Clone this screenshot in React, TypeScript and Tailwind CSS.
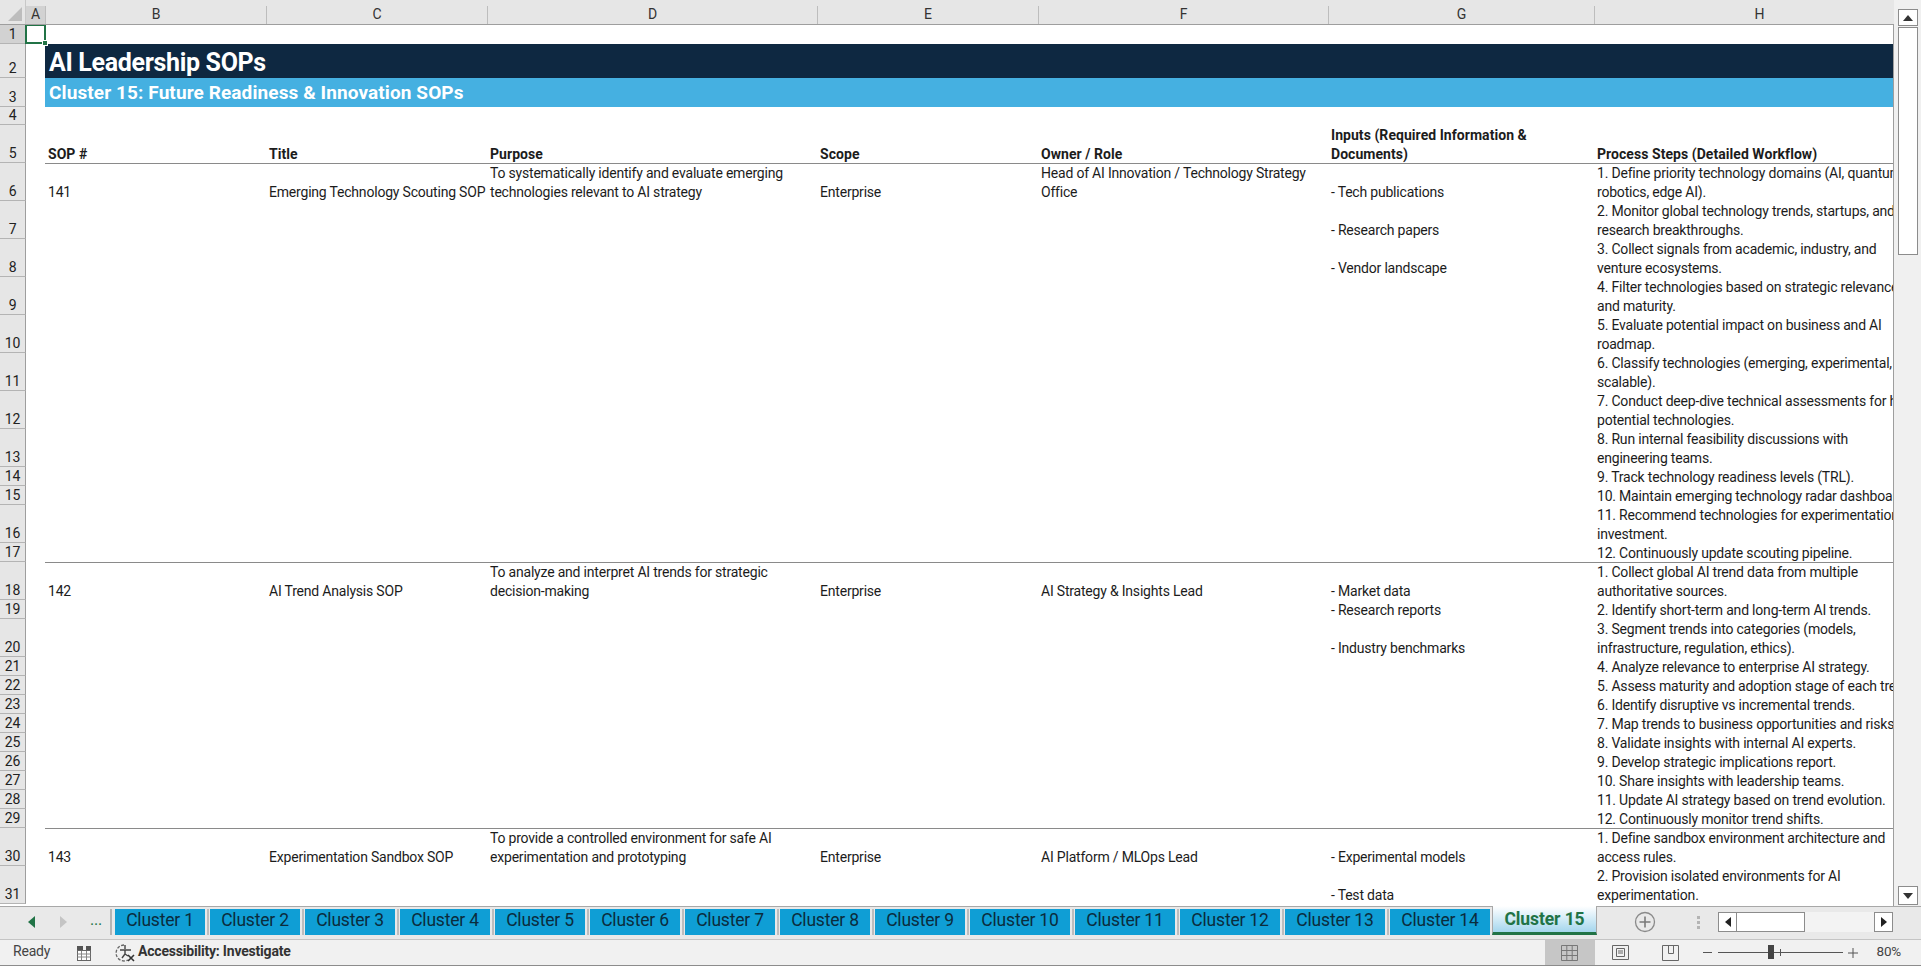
import React from 'react';

const FONT = "font-['Roboto','Liberation_Sans',sans-serif]";

const COLS = [
  { label: 'A', w: 'w-[20px]' },
  { label: 'B', w: 'w-[221px]' },
  { label: 'C', w: 'w-[221px]' },
  { label: 'D', w: 'w-[330px]' },
  { label: 'E', w: 'w-[221px]' },
  { label: 'F', w: 'w-[290px]' },
  { label: 'G', w: 'w-[266px]' },
  { label: 'H', w: 'w-[330px]' },
];

type SheetRow = {
  n: number;
  h: string;
  sop?: string;
  title?: string;
  purpose?: string[];
  scope?: string;
  owner?: string[];
  input?: string[];
  steps?: string[];
  bold?: boolean;
  line?: boolean;
};

const T = 'h-[38px]';
const S = 'h-[19px]';

const rows: SheetRow[] = [
  { n: 5, h: T, bold: true, line: true, sop: 'SOP #', title: 'Title', purpose: ['Purpose'], scope: 'Scope', owner: ['Owner / Role'], input: ['Inputs (Required Information &', 'Documents)'], steps: ['Process Steps (Detailed Workflow)'] },
  { n: 6, h: T, sop: '141', title: 'Emerging Technology Scouting SOP', purpose: ['To systematically identify and evaluate emerging', 'technologies relevant to AI strategy'], scope: 'Enterprise', owner: ['Head of AI Innovation / Technology Strategy', 'Office'], input: ['- Tech publications'], steps: ['1. Define priority technology domains (AI, quantum,', 'robotics, edge AI).'] },
  { n: 7, h: T, input: ['- Research papers'], steps: ['2. Monitor global technology trends, startups, and', 'research breakthroughs.'] },
  { n: 8, h: T, input: ['- Vendor landscape'], steps: ['3. Collect signals from academic, industry, and', 'venture ecosystems.'] },
  { n: 9, h: T, steps: ['4. Filter technologies based on strategic relevance', 'and maturity.'] },
  { n: 10, h: T, steps: ['5. Evaluate potential impact on business and AI', 'roadmap.'] },
  { n: 11, h: T, steps: ['6. Classify technologies (emerging, experimental,', 'scalable).'] },
  { n: 12, h: T, steps: ['7. Conduct deep-dive technical assessments for high-', 'potential technologies.'] },
  { n: 13, h: T, steps: ['8. Run internal feasibility discussions with', 'engineering teams.'] },
  { n: 14, h: S, steps: ['9. Track technology readiness levels (TRL).'] },
  { n: 15, h: S, steps: ['10. Maintain emerging technology radar dashboard.'] },
  { n: 16, h: T, steps: ['11. Recommend technologies for experimentation or', 'investment.'] },
  { n: 17, h: S, line: true, steps: ['12. Continuously update scouting pipeline.'] },
  { n: 18, h: T, sop: '142', title: 'AI Trend Analysis SOP', purpose: ['To analyze and interpret AI trends for strategic', 'decision-making'], scope: 'Enterprise', owner: ['AI Strategy & Insights Lead'], input: ['- Market data'], steps: ['1. Collect global AI trend data from multiple', 'authoritative sources.'] },
  { n: 19, h: S, input: ['- Research reports'], steps: ['2. Identify short-term and long-term AI trends.'] },
  { n: 20, h: T, input: ['- Industry benchmarks'], steps: ['3. Segment trends into categories (models,', 'infrastructure, regulation, ethics).'] },
  { n: 21, h: S, steps: ['4. Analyze relevance to enterprise AI strategy.'] },
  { n: 22, h: S, steps: ['5. Assess maturity and adoption stage of each trend.'] },
  { n: 23, h: S, steps: ['6. Identify disruptive vs incremental trends.'] },
  { n: 24, h: S, steps: ['7. Map trends to business opportunities and risks.'] },
  { n: 25, h: S, steps: ['8. Validate insights with internal AI experts.'] },
  { n: 26, h: S, steps: ['9. Develop strategic implications report.'] },
  { n: 27, h: S, steps: ['10. Share insights with leadership teams.'] },
  { n: 28, h: S, steps: ['11. Update AI strategy based on trend evolution.'] },
  { n: 29, h: S, line: true, steps: ['12. Continuously monitor trend shifts.'] },
  { n: 30, h: T, sop: '143', title: 'Experimentation Sandbox SOP', purpose: ['To provide a controlled environment for safe AI', 'experimentation and prototyping'], scope: 'Enterprise', owner: ['AI Platform / MLOps Lead'], input: ['- Experimental models'], steps: ['1. Define sandbox environment architecture and', 'access rules.'] },
  { n: 31, h: T, input: ['- Test data'], steps: ['2. Provision isolated environments for AI', 'experimentation.'] },
];

const tabs = [
  { name: 'Cluster 1', w: 'w-[90px]' },
  { name: 'Cluster 2', w: 'w-[90px]' },
  { name: 'Cluster 3', w: 'w-[90px]' },
  { name: 'Cluster 4', w: 'w-[90px]' },
  { name: 'Cluster 5', w: 'w-[90px]' },
  { name: 'Cluster 6', w: 'w-[90px]' },
  { name: 'Cluster 7', w: 'w-[90px]' },
  { name: 'Cluster 8', w: 'w-[90px]' },
  { name: 'Cluster 9', w: 'w-[90px]' },
  { name: 'Cluster 10', w: 'w-[100px]' },
  { name: 'Cluster 11', w: 'w-[100px]' },
  { name: 'Cluster 12', w: 'w-[100px]' },
  { name: 'Cluster 13', w: 'w-[100px]' },
  { name: 'Cluster 14', w: 'w-[100px]' },
];

const Cell: React.FC<{ w: string; lines?: string[]; bold?: boolean }> = ({ w, lines, bold }) => (
  <div className={`${w} shrink-0 pl-[2px] flex flex-col justify-end overflow-hidden whitespace-nowrap ${bold ? 'font-bold tracking-[0.05px]' : ''}`}>
    {lines?.map(l => <div key={l} className="h-[19px] leading-[21px]">{l}</div>)}
  </div>
);

const RowHead: React.FC<{ n: number; h: string; active?: boolean }> = ({ n, h, active }) => (
  <div className={`${h} w-[26px] shrink-0 flex items-end justify-center border-r border-b border-r-[#9e9e9e] border-b-[#b4b4b4] leading-[17px] text-[#222] ${active ? 'bg-[#d2d2d2]' : 'bg-[#e6e6e6]'}`}>
    {n}
  </div>
);

const ColumnHeader = () => (
  <div className="h-[25px] flex bg-[#e6e6e6] border-b border-[#9e9e9e] shrink-0">
    <div className="w-[26px] shrink-0 border-r border-[#c8c8c8] flex items-end justify-end pr-[3px] pb-[3px]">
      <svg width="14" height="14" viewBox="0 0 14 14"><path d="M14 0v14H0z" fill="#bdbdbd" /></svg>
    </div>
    {COLS.map((c, i) => (
      <div key={c.label} className={`${c.w} shrink-0 flex items-end justify-center pb-[1px] mt-[6px] border-r border-[#bdbdbd] leading-[18px] text-[#333] ${i === 0 ? 'bg-[#d2d2d2]' : ''}`}>
        {c.label}
      </div>
    ))}
  </div>
);

const Banner: React.FC<{ n: number; h: string; className: string; children: React.ReactNode }> = ({ n, h, className, children }) => (
  <div className={`${h} flex`}>
    <RowHead n={n} h={h} />
    <div className="w-[19px] shrink-0" />
    <div className={`flex-1 pl-[4px] flex items-center whitespace-nowrap font-bold text-white ${className}`}>{children}</div>
  </div>
);

const Grid = () => (
  <div className="relative flex-1 overflow-hidden bg-white border-r border-[#9e9e9e]">
    <div className="flex h-[19px]">
      <RowHead n={1} h="h-[19px]" active />
    </div>
    {/* selected cell */}
    <div className="absolute left-[25px] top-[-1px] w-[21px] h-[20px] border-2 border-[#217346]">
      <div className="absolute right-[-4px] bottom-[-4px] w-[6px] h-[6px] bg-[#217346] border border-white" />
    </div>
    <Banner n={2} h="h-[34px]" className="bg-[#0e2841] text-[25px] tracking-[-0.33px] pt-[3px]">AI Leadership SOPs</Banner>
    <Banner n={3} h="h-[29px]" className="bg-[#45b0e1] text-[19px] tracking-[0.1px] pt-[1px]">Cluster 15: Future Readiness &amp; Innovation SOPs</Banner>
    <div className="flex h-[18px]">
      <RowHead n={4} h="h-[18px]" />
    </div>
    {rows.map(r => (
      <div key={r.n} className={`${r.h} flex relative`}>
        <RowHead n={r.n} h={r.h} />
        <div className="w-[20px] shrink-0" />
        <Cell w={COLS[1].w} lines={r.sop ? [r.sop] : undefined} bold={r.bold} />
        <Cell w={COLS[2].w} lines={r.title ? [r.title] : undefined} bold={r.bold} />
        <Cell w={COLS[3].w} lines={r.purpose} bold={r.bold} />
        <Cell w={COLS[4].w} lines={r.scope ? [r.scope] : undefined} bold={r.bold} />
        <Cell w={COLS[5].w} lines={r.owner} bold={r.bold} />
        <Cell w={COLS[6].w} lines={r.input} bold={r.bold} />
        <Cell w={COLS[7].w} lines={r.steps} bold={r.bold} />
        {r.line && <div className="absolute left-[45px] right-0 bottom-[-1px] h-px bg-[#8a8a8a]" />}
      </div>
    ))}
  </div>
);

const VScroll = () => (
  <div className="w-[27px] shrink-0 bg-[#f0f0f0] flex flex-col items-center pt-[9px] pb-[1px] pl-[2px] pr-[2px]">
    <button className="w-[20px] h-[17px] bg-white border border-[#8c8c8c] flex items-center justify-center shrink-0">
      <svg width="10" height="6" viewBox="0 0 10 6"><path d="M5 0l5 6H0z" fill="#333" /></svg>
    </button>
    <div className="w-[20px] h-[228px] mt-[1px] bg-white border border-[#8c8c8c] shrink-0" />
    <div className="flex-1" />
    <button className="w-[20px] h-[19px] bg-white border border-[#8c8c8c] flex items-center justify-center shrink-0">
      <svg width="10" height="6" viewBox="0 0 10 6"><path d="M5 6l5-6H0z" fill="#333" /></svg>
    </button>
  </div>
);

const TabBar = () => (
  <div className="h-[33px] shrink-0 bg-[#e9e9e9] border-t border-[#a8a8a8] flex items-start pt-[2px]">
    <div className="w-[112px] h-[26px] shrink-0 flex items-center relative border-r-2 border-[#b4b4b4]">
      <svg className="ml-[28px]" width="7" height="12" viewBox="0 0 7 12"><path d="M7 0v12L0 6z" fill="#217346" /></svg>
      <svg className="ml-[25px]" width="7" height="12" viewBox="0 0 7 12"><path d="M0 0v12l7-6z" fill="#c4c4c4" /></svg>
      <span className="ml-[23px] text-[#217346] text-[16px] leading-none pb-[4px]">...</span>
    </div>
    <div className="flex items-stretch h-[26px] ml-[3px]">
      {tabs.map(t => (
        <div key={t.name} className="flex items-stretch">
          <div className={`${t.w} bg-[#0f9ed5] flex items-center justify-center pb-[3px] text-[17.5px] tracking-[-0.2px] text-[#0b2c3d] whitespace-nowrap`}>{t.name}</div>
          <div className="w-[5px] flex justify-center"><div className="w-[2px] bg-[#bdbdbd]" /></div>
        </div>
      ))}
    </div>
    <div className="w-[105px] h-[29px] -mt-[3px] -ml-[3px] shrink-0 bg-gradient-to-b from-[#ffffff] to-[#a4d6ed] border-x border-[#a8a8a8] border-b-[3px] border-b-[#217346] flex items-center justify-center text-[17.5px] tracking-[-0.1px] font-bold text-[#217346]">
      Cluster 15
    </div>
    <div className="flex items-center h-[26px] flex-1 relative">
      <svg className="ml-[37px]" width="22" height="22" viewBox="0 0 22 22"><circle cx="11" cy="11" r="9.5" fill="none" stroke="#8a8a8a" strokeWidth="1.3" /><path d="M11 5.5v11M5.5 11h11" stroke="#7a7a7a" strokeWidth="1.6" /></svg>
      <div className="ml-[41px] flex flex-col gap-[2px]">
        <span className="w-[3px] h-[3px] bg-[#b4b4b4]" />
        <span className="w-[3px] h-[3px] bg-[#b4b4b4]" />
        <span className="w-[3px] h-[3px] bg-[#b4b4b4]" />
      </div>
      <div className="ml-[18px] w-[175px] h-[20px] bg-[#f3f3f3] flex">
        <div className="w-[19px] bg-white border border-[#8c8c8c] flex items-center justify-center">
          <svg width="6" height="10" viewBox="0 0 6 10"><path d="M6 0v10L0 5z" fill="#222" /></svg>
        </div>
        <div className="w-[69px] -ml-px bg-white border border-[#8c8c8c]" />
        <div className="flex-1" />
        <div className="w-[19px] bg-white border border-[#8c8c8c] flex items-center justify-center">
          <svg width="6" height="10" viewBox="0 0 6 10"><path d="M0 0v10l6-5z" fill="#222" /></svg>
        </div>
      </div>
    </div>
  </div>
);

const StatusBar = () => (
  <div className="h-[27px] shrink-0 bg-[#f1f1f1] border-t border-[#c4c4c4] border-b border-b-[#8c8c8c] flex items-center text-[14px] text-[#444]">
    <span className="ml-[13px] w-[37px] pb-[2px]">Ready</span>
    <svg className="ml-[26px]" width="16" height="16" viewBox="0 0 16 16">
      <rect x="1.5" y="5.5" width="13" height="10" fill="#fff" stroke="#666" />
      <path d="M1.5 9h13M1.5 12h13M5.5 6v9M10.5 6v9" stroke="#888" />
      <rect x="1" y="1" width="6" height="4" fill="#555" />
      <rect x="10" y="1" width="5" height="4" fill="#555" />
    </svg>
    <svg className="ml-[22px]" width="22" height="20" viewBox="0 0 22 20">
      <path d="M10 2a8 8 0 1 0 4 15" fill="none" stroke="#666" strokeWidth="1.3" strokeDasharray="3 1.5" />
      <path d="M11 2v4M6 7h11M11 7v4l-3 4M11 11l3 2" fill="none" stroke="#444" strokeWidth="1.4" />
      <path d="M14 12l6 6M20 12l-6 6" stroke="#333" strokeWidth="1.6" />
    </svg>
    <span className="ml-[2px] pb-[2px] font-bold text-[#333]">Accessibility: Investigate</span>
    <div className="flex-1" />
    <div className="w-[50px] h-full bg-[#c6c6c6] flex items-center justify-center">
      <svg width="17" height="16" viewBox="0 0 17 16"><path d="M.5.5h16v15H.5zM.5 5.5h16M.5 10.5h16M5.8.5v15M11.2.5v15" fill="none" stroke="#777" /></svg>
    </div>
    <svg className="ml-[17px]" width="17" height="15" viewBox="0 0 17 15"><path d="M.5.5h16v14H.5zM4.5 3.5h8v8h-8zM6 6h5M6 8h5" fill="none" stroke="#666" /></svg>
    <svg className="ml-[33px]" width="17" height="16" viewBox="0 0 17 16"><path d="M.5.5h16v15H.5zM6.5.5v8h5V.5" fill="none" stroke="#666" /></svg>
    <span className="ml-[24px] w-[9px] h-[1.5px] bg-[#555]" />
    <div className="relative ml-[6px] w-[125px] h-px bg-[#555]">
      <div className="absolute left-[50px] -top-[7px] w-[6px] h-[14px] bg-[#444]" />
      <div className="absolute left-[62px] -top-[3px] w-px h-[7px] bg-[#555]" />
    </div>
    <svg className="ml-[5px]" width="10" height="10" viewBox="0 0 10 10"><path d="M5 0v10M0 5h10" stroke="#555" /></svg>
    <span className="ml-[19px] mr-[20px] pb-[2px] text-[13.5px]">80%</span>
  </div>
);

export default function App() {
  return (
    <div className={`${FONT} h-[966px] w-full overflow-hidden flex flex-col bg-white text-[14px] tracking-[-0.2px] text-[#1c1c1c]`}>
      <div className="flex flex-1 min-h-0">
        <div className="flex-1 min-w-0 flex flex-col">
          <ColumnHeader />
          <Grid />
        </div>
        <VScroll />
      </div>
      <TabBar />
      <StatusBar />
    </div>
  );
}
